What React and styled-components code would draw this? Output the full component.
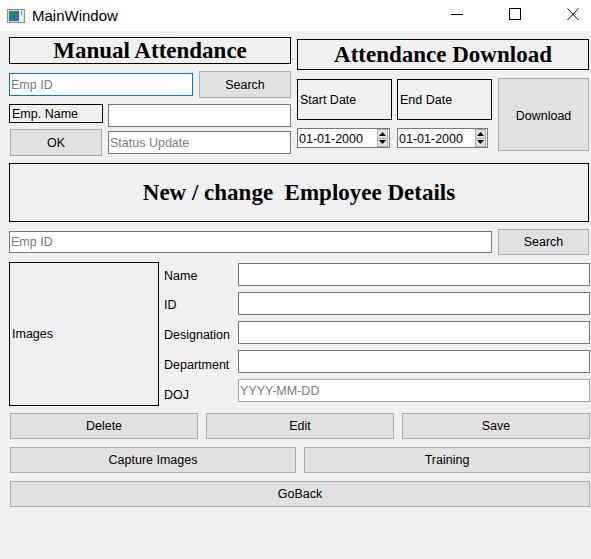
import React from 'react';
import styled, { createGlobalStyle } from 'styled-components';

const GlobalStyle = createGlobalStyle`
  html, body { margin: 0; padding: 0; background: #f0f0f0; }
  body {
    font-family: "Liberation Sans", Arial, sans-serif;
    font-size: 12.5px;
    color: #000;
  }
  * { box-sizing: border-box; }
`;

const Window = styled.div`
  width: 591px;
  height: 559px;
  background: #f0f0f0;
  display: flex;
  flex-direction: column;
  overflow: hidden;
`;

const TitleBar = styled.div`
  height: 31px;
  flex-shrink: 0;
  background: #fff;
  display: flex;
  align-items: center;
`;

const AppIcon = styled.svg`
  margin-left: 7px;
  width: 18px;
  height: 14px;
  flex-shrink: 0;
`;

const Title = styled.span`
  margin-left: 7px;
  font-size: 15px;
  color: #000;
`;

const Controls = styled.div`
  margin-left: auto;
  margin-right: 12px;
  align-self: flex-start;
  padding-top: 8px;
  display: flex;
  gap: 46px;
`;

const CtrlIcon = styled.svg`
  width: 12px;
  height: 13px;
  display: block;
`;

const Content = styled.div`
  padding-left: 9px;
  display: flex;
  flex-direction: column;
`;

const Top = styled.div`
  margin-top: 6px;
  display: grid;
  grid-template-columns: 282px 292px;
  column-gap: 6px;
  align-items: start;
`;

const Column = styled.div`
  display: flex;
  flex-direction: column;
  margin-top: ${(p) => p.$mt || 0}px;
`;

const HeadingBox = styled.div`
  height: ${(p) => p.$h}px;
  width: ${(p) => (p.$w ? `${p.$w}px` : 'auto')};
  margin-top: ${(p) => p.$mt || 0}px;
  border: 1px solid #000;
  display: flex;
  align-items: center;
  justify-content: center;
  font-family: "Liberation Serif", "Times New Roman", serif;
  font-weight: bold;
  font-size: 23px;
  white-space: pre;
  padding-top: ${(p) => p.$pt || 0}px;
`;

const Row = styled.div`
  display: flex;
  align-items: ${(p) => p.$align || 'center'};
  gap: ${(p) => p.$gap || 0}px;
  margin-top: ${(p) => p.$mt || 0}px;
`;

const Input = styled.input`
  width: ${(p) => p.$w}px;
  height: ${(p) => p.$h || 23}px;
  border: 1px solid ${(p) => (p.$focus ? '#0078d7' : p.$soft ? '#a6a6a6' : '#7a7a7a')};
  background: #fff;
  padding: 0 1px;
  margin: 0;
  font-family: "Liberation Sans", Arial, sans-serif;
  font-size: 12.5px;
  color: #000;
  outline: none;
  &::placeholder { color: #7b7b7b; opacity: 1; }
`;

const Button = styled.button`
  width: ${(p) => (p.$w ? `${p.$w}px` : '100%')};
  height: ${(p) => p.$h || 26}px;
  margin: 0;
  margin-left: ${(p) => p.$ml || 0}px;
  padding: 0;
  padding-top: ${(p) => p.$pt || 0}px;
  background: #e1e1e1;
  border: 1px solid #adadad;
  font-family: "Liberation Sans", Arial, sans-serif;
  font-size: 12.5px;
  color: #000;
  display: flex;
  align-items: center;
  justify-content: center;
  flex-shrink: 0;
`;

const FramedLabel = styled.div`
  width: ${(p) => p.$w}px;
  height: ${(p) => p.$h}px;
  border: 1px solid #000;
  padding-left: ${(p) => p.$pl || 2}px;
  display: flex;
  align-items: center;
  flex-shrink: 0;
`;

const DateArea = styled.div`
  margin-top: 8px;
  display: flex;
  align-items: flex-start;
`;

const DateCol = styled.div`
  width: 95px;
  display: flex;
  flex-direction: column;
  margin-right: ${(p) => p.$mr || 0}px;
  padding-top: 1px;
`;

const SpinBox = styled.div`
  margin-top: 8px;
  width: ${(p) => p.$w}px;
  height: 20px;
  border: 1px solid #7a7a7a;
  background: #fff;
  display: flex;
  align-items: center;
  padding-left: 1px;
`;

const SpinText = styled.span`
  flex: 1;
  padding-top: 1px;
`;

const SpinButtons = styled.div`
  width: 11px;
  height: 18px;
  margin-right: 1px;
  display: flex;
  flex-direction: column;
`;

const SpinBtn = styled.div`
  flex: 1;
  background: #e1e1e1;
  border: 1px solid #adadad;
  margin-top: ${(p) => (p.$down ? -1 : 0)}px;
  display: flex;
  align-items: center;
  justify-content: center;
`;

const Details = styled.div`
  margin-top: 7px;
  display: flex;
  align-items: flex-start;
`;

const Form = styled.div`
  margin-left: 5px;
  margin-top: 1px;
  display: grid;
  grid-template-columns: 74px 352px;
  grid-auto-rows: 23px;
  row-gap: 6px;
`;

const FieldLabel = styled.div`
  display: flex;
  align-items: center;
  padding-top: ${(p) => p.$pt || 0}px;
`;

const Buttons = styled.div`
  padding-left: 1px;
  width: 581px;
  display: grid;
  grid-template-columns: repeat(${(p) => p.$cols}, 1fr);
  column-gap: 8px;
  margin-top: ${(p) => p.$mt}px;
`;

const Up = () => (
  <svg width="7" height="4" viewBox="0 0 7 4"><path d="M3.5 0 L7 4 L0 4 Z" fill="#000" /></svg>
);
const Down = () => (
  <svg width="7" height="4" viewBox="0 0 7 4"><path d="M0 0 L7 0 L3.5 4 Z" fill="#000" /></svg>
);

const Spin = ({ w }) => (
  <SpinBox $w={w}>
    <SpinText>01-01-2000</SpinText>
    <SpinButtons>
      <SpinBtn><Up /></SpinBtn>
      <SpinBtn $down><Down /></SpinBtn>
    </SpinButtons>
  </SpinBox>
);

const fields = [
  { label: 'Name', pt: 2 },
  { label: 'ID', pt: 2 },
  { label: 'Designation', pt: 4 },
  { label: 'Department', pt: 6 },
  { label: 'DOJ', pt: 8, soft: true, placeholder: 'YYYY-MM-DD' },
];

export default function App() {
  return (
    <>
      <GlobalStyle />
      <Window>
        <TitleBar>
          <AppIcon viewBox="0 0 18 14">
            <defs>
              <linearGradient id="ig" x1="0" y1="0" x2="0.6" y2="1">
                <stop offset="0" stopColor="#3f8f6a" />
                <stop offset="0.5" stopColor="#2f7c8c" />
                <stop offset="1" stopColor="#3567b8" />
              </linearGradient>
            </defs>
            <rect x="0.5" y="0.5" width="17" height="13" fill="#dcdcdc" stroke="#8f8f8f" />
            <rect x="2" y="2" width="10" height="10" fill="url(#ig)" />
            <rect x="12" y="2" width="4" height="10" fill="#eef0f0" />
            <rect x="14" y="2" width="1" height="4" fill="#7a8a8a" />
          </AppIcon>
          <Title>MainWindow</Title>
          <Controls>
            <CtrlIcon viewBox="0 0 12 13">
              <line x1="0" y1="6.5" x2="12" y2="6.5" stroke="#000" strokeWidth="1" />
            </CtrlIcon>
            <CtrlIcon viewBox="0 0 12 13">
              <rect x="0.5" y="0.5" width="11" height="11" fill="none" stroke="#000" strokeWidth="1" />
            </CtrlIcon>
            <CtrlIcon viewBox="0 0 12 13">
              <path d="M0.5 0.5 L11.5 12 M11.5 0.5 L0.5 12" stroke="#000" strokeWidth="1" fill="none" />
            </CtrlIcon>
          </Controls>
        </TitleBar>

        <Content>
          <Top>
            <Column>
              <HeadingBox $h={27}>Manual Attendance</HeadingBox>
              <Row $mt={7} $gap={6}>
                <Input $w={184} $focus placeholder="Emp ID" />
                <Button $w={92} $h={27}>Search</Button>
              </Row>
              <Row $mt={6} $gap={5} $align="flex-start">
                <FramedLabel $w={94} $h={19}>Emp. Name</FramedLabel>
                <Input $w={184} />
              </Row>
              <Row $mt={2} $gap={6}>
                <Button $w={92} $h={27} $ml={1}>OK</Button>
                <Input $w={184} placeholder="Status Update" />
              </Row>
            </Column>

            <Column $mt={2}>
              <HeadingBox $h={31} $pt={1}>Attendance Download</HeadingBox>
              <DateArea>
                <DateCol $mr={5}>
                  <FramedLabel $w={95} $h={41}>Start Date</FramedLabel>
                  <Spin w={93} />
                </DateCol>
                <DateCol $mr={6}>
                  <FramedLabel $w={95} $h={41}>End Date</FramedLabel>
                  <Spin w={91} />
                </DateCol>
                <Button $w={91} $h={73} $pt={2}>Download</Button>
              </DateArea>
            </Column>
          </Top>

          <HeadingBox $h={59} $w={580} $mt={7} $pt={1}>New / change  Employee Details</HeadingBox>

          <Row $mt={7} $gap={6}>
            <Input $w={483} $h={22} placeholder="Emp ID" />
            <Button $w={91} $h={26}>Search</Button>
          </Row>

          <Details>
            <FramedLabel $w={150} $h={144}>Images</FramedLabel>
            <Form>
              {fields.map((f) => (
                <React.Fragment key={f.label}>
                  <FieldLabel $pt={f.pt}>{f.label}</FieldLabel>
                  <Input $w={352} $soft={f.soft} placeholder={f.placeholder} />
                </React.Fragment>
              ))}
            </Form>
          </Details>

          <Buttons $cols={3} $mt={7}>
            <Button>Delete</Button>
            <Button>Edit</Button>
            <Button>Save</Button>
          </Buttons>
          <Buttons $cols={2} $mt={8}>
            <Button>Capture Images</Button>
            <Button>Training</Button>
          </Buttons>
          <Buttons $cols={1} $mt={8}>
            <Button>GoBack</Button>
          </Buttons>
        </Content>
      </Window>
    </>
  );
}
